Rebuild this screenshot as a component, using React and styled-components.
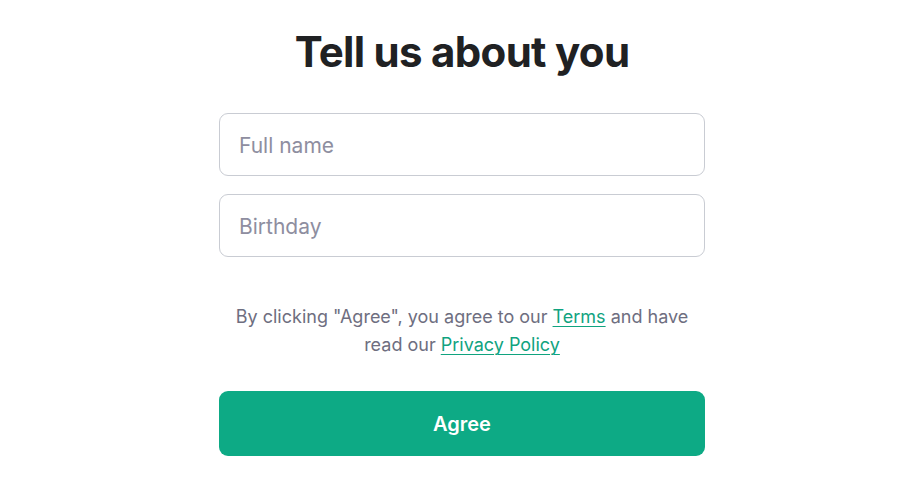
import React from "react";
import styled, { createGlobalStyle } from "styled-components";

const Global = createGlobalStyle`
  html, body { margin: 0; padding: 0; background: #ffffff; }
  body { font-family: Inter, "Noto Sans", "Liberation Sans", sans-serif; }
  * { box-sizing: border-box; }
`;

const Page = styled.main`
  display: flex;
  justify-content: center;
  padding: 26px 0 0 24px;
  min-height: 485px;
`;

const Card = styled.section`
  width: 486px;
  display: flex;
  flex-direction: column;
  align-items: stretch;
`;

const Title = styled.h1`
  margin: 0 0 35px;
  text-align: center;
  font-size: 42px;
  line-height: 52px;
  font-weight: 700;
  letter-spacing: -0.7px;
  color: #202123;
`;

const Fields = styled.div`
  display: flex;
  flex-direction: column;
  gap: 18px;
`;

const Input = styled.input`
  height: 63px;
  width: 100%;
  border: 1.5px solid #c9ccd3;
  border-radius: 9px;
  padding: 2px 19px 0;
  font-family: inherit;
  font-size: 21px;
  color: #2d333a;
  background: #fff;
  outline: none;
  &::placeholder { color: #8e8ea0; }
`;

const Notice = styled.p`
  margin: 46px 0 32px;
  text-align: center;
  font-size: 18px;
  line-height: 28px;
  color: #6e6e80;
`;

const Link = styled.a`
  color: #10a37f;
  text-decoration: underline;
  text-underline-offset: 3px;
  text-decoration-thickness: 1px;
`;

const Button = styled.button`
  height: 65px;
  width: 100%;
  border: none;
  border-radius: 9px;
  background: #0daa85;
  color: #fff;
  font-family: inherit;
  font-size: 20px;
  font-weight: 600;
  cursor: pointer;
`;

export default function App() {
  return (
    <>
      <Global />
      <Page>
        <Card>
          <Title>Tell us about you</Title>
          <Fields>
            <Input placeholder="Full name" />
            <Input placeholder="Birthday" />
          </Fields>
          <Notice>
            By clicking "Agree", you agree to our <Link href="#">Terms</Link> and have
            <br />
            read our <Link href="#">Privacy Policy</Link>
          </Notice>
          <Button>Agree</Button>
        </Card>
      </Page>
    </>
  );
}
